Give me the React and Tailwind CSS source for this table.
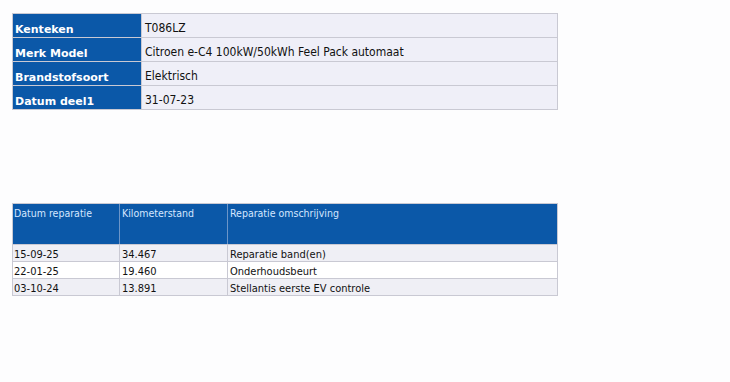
import React from 'react';

const font = { fontFamily: '"DejaVu Sans Condensed", "DejaVu Sans", Tahoma, sans-serif' };
const labelFont = { fontFamily: '"DejaVu Sans", Tahoma, sans-serif' };

const vehicle = [
  ['Kenteken', 'T086LZ'],
  ['Merk Model', 'Citroen e-C4 100kW/50kWh Feel Pack automaat'],
  ['Brandstofsoort', 'Elektrisch'],
  ['Datum deel1', '31-07-23'],
];

const repairs = [
  ['15-09-25', '34.467', 'Reparatie band(en)'],
  ['22-01-25', '19.460', 'Onderhoudsbeurt'],
  ['03-10-24', '13.891', 'Stellantis eerste EV controle'],
];

export default function App() {
  return (
    <div className="w-[730px] h-[382px] bg-[#fdfdfe] pt-[13px] pl-[12px] text-[#111]" style={font}>
      {/* Voertuiggegevens */}
      <div className="w-[546px] border border-[#c9c9d3] border-b-0">
        {vehicle.map(([label, value]) => (
          <div key={label} className="flex h-[24px] border-b border-[#c9c9d3]">
            <div
              className="w-[129px] bg-[#0b58a8] text-white font-bold text-[11px] leading-[12px] flex items-end pl-[2px] pb-[1px] border-r border-[#c9c9d3]"
              style={labelFont}
            >
              {label}
            </div>
            <div className="flex-1 bg-[#efeff8] text-[12px] leading-[14px] flex items-end pl-[3px] pb-[2px]">
              {value}
            </div>
          </div>
        ))}
      </div>

      {/* Reparaties */}
      <div className="mt-[93px] w-[546px] border border-[#c9c9d3] border-b-0 text-[11px]">
        <div className="flex h-[41px] bg-[#0b58a8] text-[#d4e6ff] text-[10.5px] border-b border-[#c9c9d3]">
          <div className="w-[107px] pl-[1px] pt-[2px] border-r border-[#6c95c8]">Datum reparatie</div>
          <div className="w-[108px] pl-[2px] pt-[2px] border-r border-[#6c95c8]">Kilometerstand</div>
          <div className="flex-1 pl-[2px] pt-[2px]">Reparatie omschrijving</div>
        </div>
        {repairs.map(([date, km, desc], i) => (
          <div
            key={date}
            className={`flex h-[17px] leading-[13px] border-b border-[#c9c9d3] ${i === 1 ? 'bg-white' : 'bg-[#efeff5]'}`}
          >
            <div className="w-[107px] pl-[1px] flex items-end border-r border-[#c9c9d3]">{date}</div>
            <div className="w-[108px] pl-[2px] flex items-end border-r border-[#c9c9d3]">{km}</div>
            <div className="flex-1 pl-[2px] flex items-end">{desc}</div>
          </div>
        ))}
      </div>
    </div>
  );
}
